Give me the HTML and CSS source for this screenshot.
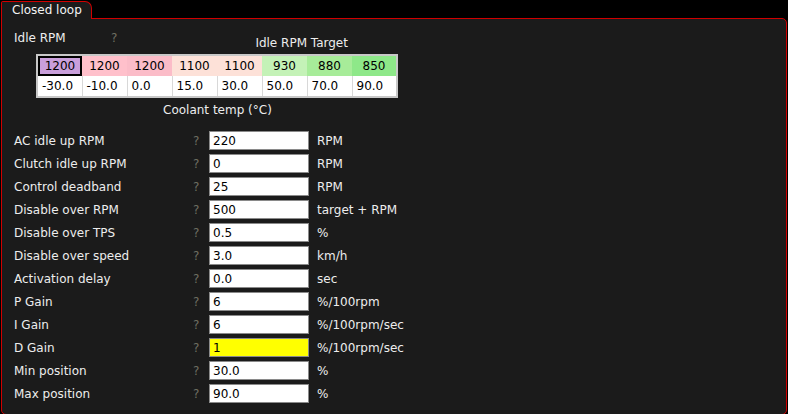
FILE: index.html
```html
<!DOCTYPE html>
<html lang="en">
<head>
  <meta charset="UTF-8" />
  <title>Closed loop</title>
  <link rel="stylesheet" href="styles.css">
</head>
<body>
  <div class="tab">Closed loop</div>
  <div class="panel">
    <div class="curve-head">
      <div class="curve-label">Idle RPM</div>
      <div class="help">?</div>
      <div class="curve-title">Idle RPM Target</div>
    </div>

    <table class="curve">
      <tr class="targets">
        <td class="selected">1200</td>
        <td class="c-pink">1200</td>
        <td class="c-pink2">1200</td>
        <td class="c-peach">1100</td>
        <td class="c-peach">1100</td>
        <td class="c-green1">930</td>
        <td class="c-green2">880</td>
        <td class="c-green3">850</td>
      </tr>
      <tr class="axis">
        <td>-30.0</td>
        <td>-10.0</td>
        <td>0.0</td>
        <td>15.0</td>
        <td>30.0</td>
        <td>50.0</td>
        <td>70.0</td>
        <td>90.0</td>
      </tr>
    </table>
    <div class="axis-title">Coolant temp (°C)</div>

    <div class="settings">
      <label>AC idle up RPM</label><span class="help">?</span><input value="220"><span class="unit">RPM</span>
      <label>Clutch idle up RPM</label><span class="help">?</span><input value="0"><span class="unit">RPM</span>
      <label>Control deadband</label><span class="help">?</span><input value="25"><span class="unit">RPM</span>
      <label>Disable over RPM</label><span class="help">?</span><input value="500"><span class="unit">target + RPM</span>
      <label>Disable over TPS</label><span class="help">?</span><input value="0.5"><span class="unit">%</span>
      <label>Disable over speed</label><span class="help">?</span><input value="3.0"><span class="unit">km/h</span>
      <label>Activation delay</label><span class="help">?</span><input value="0.0"><span class="unit">sec</span>
      <label>P Gain</label><span class="help">?</span><input value="6"><span class="unit">%/100rpm</span>
      <label>I Gain</label><span class="help">?</span><input value="6"><span class="unit">%/100rpm/sec</span>
      <label>D Gain</label><span class="help">?</span><input class="changed" value="1"><span class="unit">%/100rpm/sec</span>
      <label>Min position</label><span class="help">?</span><input value="30.0"><span class="unit">%</span>
      <label>Max position</label><span class="help">?</span><input value="90.0"><span class="unit">%</span>
    </div>
  </div>
</body>
</html>
```

FILE: styles.css
```css
body {
  margin: 0;
  background-color: #000;
  font-family: "DejaVu Sans", Verdana, sans-serif;
  font-size: 12px;
  color: #ededed;
  width: 788px;
  height: 414px;
  overflow: hidden;
}

.tab {
  position: relative;
  z-index: 1;
  width: 79px;
  height: 17px;
  margin-top: 1px;
  margin-left: 1px;
  padding-left: 10px;
  line-height: 17px;
  background-color: #1b1b1b;
  border: 1px solid #d00000;
  border-bottom: none;
  border-radius: 2px 7px 0 0;
  color: #f4f4f4;
}

.panel {
  margin-top: -1px;
  margin-left: 1px;
  width: 786px;
  height: 397px;
  box-sizing: border-box;
  padding: 12px 0 0 12px;
  background-color: #1b1b1b;
  border: 1px solid #d00000;
  border-radius: 0 5px 5px 5px;
}

.curve-head {
  display: flex;
  align-items: flex-start;
  height: 23px;
}

.curve-label {
  width: 97px;
}

.help {
  color: #6f6f62;
}

.curve-title {
  margin-left: 138px;
  margin-top: 5px;
}

.curve {
  margin-left: 22px;
  width: 362px;
  table-layout: fixed;
  border-collapse: collapse;
  border: 2px solid #c8c8c8;
  color: #000;
}

.curve td {
  height: 20px;
  padding: 0;
}

.targets td {
  text-align: center;
}

.axis td {
  background-color: #fff;
  border-left: 1px solid #d8d8d8;
  padding-left: 4px;
}

.axis td:first-child {
  border-left: none;
}

.targets .selected {
  background-color: #c99fdb;
  box-shadow: inset 0 0 0 2px #000;
}

.c-pink { background-color: #ffc0cb; }
.c-pink2 { background-color: #fbbcc8; }
.c-peach { background-color: #fde1d8; }
.c-green1 { background-color: #c4f2b7; }
.c-green2 { background-color: #a7ec99; }
.c-green3 { background-color: #8ee889; }

.axis-title {
  margin-left: 149px;
  margin-top: 5px;
}

.settings {
  display: grid;
  grid-template-columns: 179px 16px 100px auto;
  grid-auto-rows: 19px;
  row-gap: 4px;
  align-items: center;
  margin-top: 14px;
}

.settings input {
  box-sizing: border-box;
  width: 100px;
  height: 19px;
  margin: 0;
  padding: 0 0 0 3px;
  border: 1px solid #8a8a8a;
  background-color: #fff;
  font-family: inherit;
  font-size: 12px;
  color: #000;
  outline: none;
}

.settings input.changed {
  background-color: #ffff00;
}

.unit {
  padding-left: 8px;
}
```
